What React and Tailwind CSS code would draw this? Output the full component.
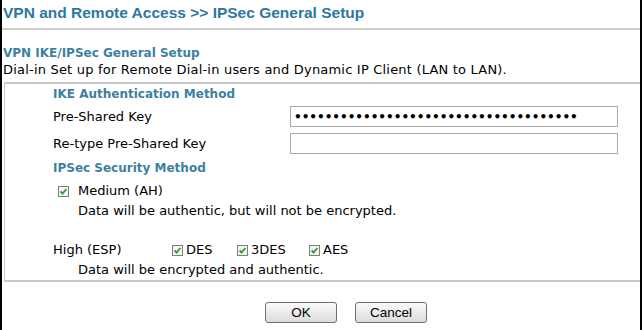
import React from "react";

const font = { fontFamily: '"DejaVu Sans", Verdana, sans-serif' };

function Check() {
  return (
    <svg width="11" height="11" viewBox="0 0 11 11" className="shrink-0">
      <rect x="0.5" y="0.5" width="10" height="10" fill="#f4f6f4" stroke="#7c7c7c" />
      <path d="M2.6 5.4 L4.5 7.6 L8.4 3.0" fill="none" stroke="#2f9a2f" strokeWidth="1.8" />
    </svg>
  );
}

function Field({ children }) {
  return (
    <div className="w-[328px] h-[21px] border border-[#a9a9a9] bg-white flex items-center pl-[3px] overflow-hidden text-[12px] font-bold leading-none text-black">
      {children}
    </div>
  );
}

export default function App() {
  return (
    <div
      className="w-[642px] h-[330px] bg-white border-x-2 border-black text-black text-[13px] overflow-hidden"
      style={font}
    >
      {/* Page title */}
      <div className="pt-[3px] pb-[5px] pl-[1px] border-b-2 border-[#cdcdcd]">
        <h1
          className="text-[15.5px] leading-[20px] font-bold text-[#2c78a0]"
          style={{ fontFamily: '"Liberation Sans", Arial, sans-serif' }}
        >
          VPN and Remote Access &gt;&gt; IPSec General Setup
        </h1>
      </div>

      <div className="mt-[15px] pl-[1px] h-[16px] leading-[16px] text-[12px] font-bold text-[#3d7fa2]">
        VPN IKE/IPSec General Setup
      </div>
      <div className="mt-[1px] pl-[1px] h-[16px] leading-[16px] tracking-[0.2px]">
        Dial-in Set up for Remote Dial-in users and Dynamic IP Client (LAN to LAN).
      </div>

      {/* Settings table */}
      <div className="mt-[4px] ml-[2px] border-t-2 border-b-2 border-l border-[#c8c8c8] pl-[48px] pt-[2px] pb-[2px]">
        <div className="h-[16px] leading-[16px] text-[12px] font-bold text-[#3d7fa2]">
          IKE Authentication Method
        </div>

        <div className="mt-[4px] flex items-center h-[21px]">
          <div className="w-[237px] leading-[16px]">Pre-Shared Key</div>
          <Field>{"•".repeat(37)}</Field>
        </div>

        <div className="mt-[6px] flex items-center h-[21px]">
          <div className="w-[237px] leading-[16px]">Re-type Pre-Shared Key</div>
          <Field />
        </div>

        <div className="mt-[6px] h-[16px] leading-[16px] text-[12px] font-bold text-[#3d7fa2]">
          IPSec Security Method
        </div>

        <div className="mt-[7px] h-[16px] flex items-center pl-[5px] gap-[9px]">
          <Check />
          <span className="leading-[16px]">Medium (AH)</span>
        </div>
        <div className="mt-[4px] h-[16px] leading-[16px] pl-[25px]">
          Data will be authentic, but will not be encrypted.
        </div>

        <div className="mt-[23px] h-[16px] flex items-center">
          <span className="w-[119px] leading-[16px]">High (ESP)</span>
          <div className="flex items-center gap-[3px] w-[65px]">
            <Check />
            <span>DES</span>
          </div>
          <div className="flex items-center gap-[3px] w-[72px]">
            <Check />
            <span>3DES</span>
          </div>
          <div className="flex items-center gap-[3px]">
            <Check />
            <span>AES</span>
          </div>
        </div>
        <div className="mt-[4px] h-[16px] leading-[16px] pl-[25px]">
          Data will be encrypted and authentic.
        </div>
      </div>

      {/* Buttons */}
      <div
        className="mt-[20px] flex pl-[263px] gap-[18px] text-[13.5px]"
        style={{ fontFamily: '"Liberation Sans", Arial, sans-serif' }}
      >
        <button className="w-[72px] h-[21px] rounded-[3px] border border-[#6f6f6f] bg-gradient-to-b from-[#fafafa] to-[#dcdcdc] text-black leading-none">
          OK
        </button>
        <button className="w-[72px] h-[21px] rounded-[3px] border border-[#6f6f6f] bg-gradient-to-b from-[#fafafa] to-[#dcdcdc] text-black leading-none">
          Cancel
        </button>
      </div>
    </div>
  );
}
